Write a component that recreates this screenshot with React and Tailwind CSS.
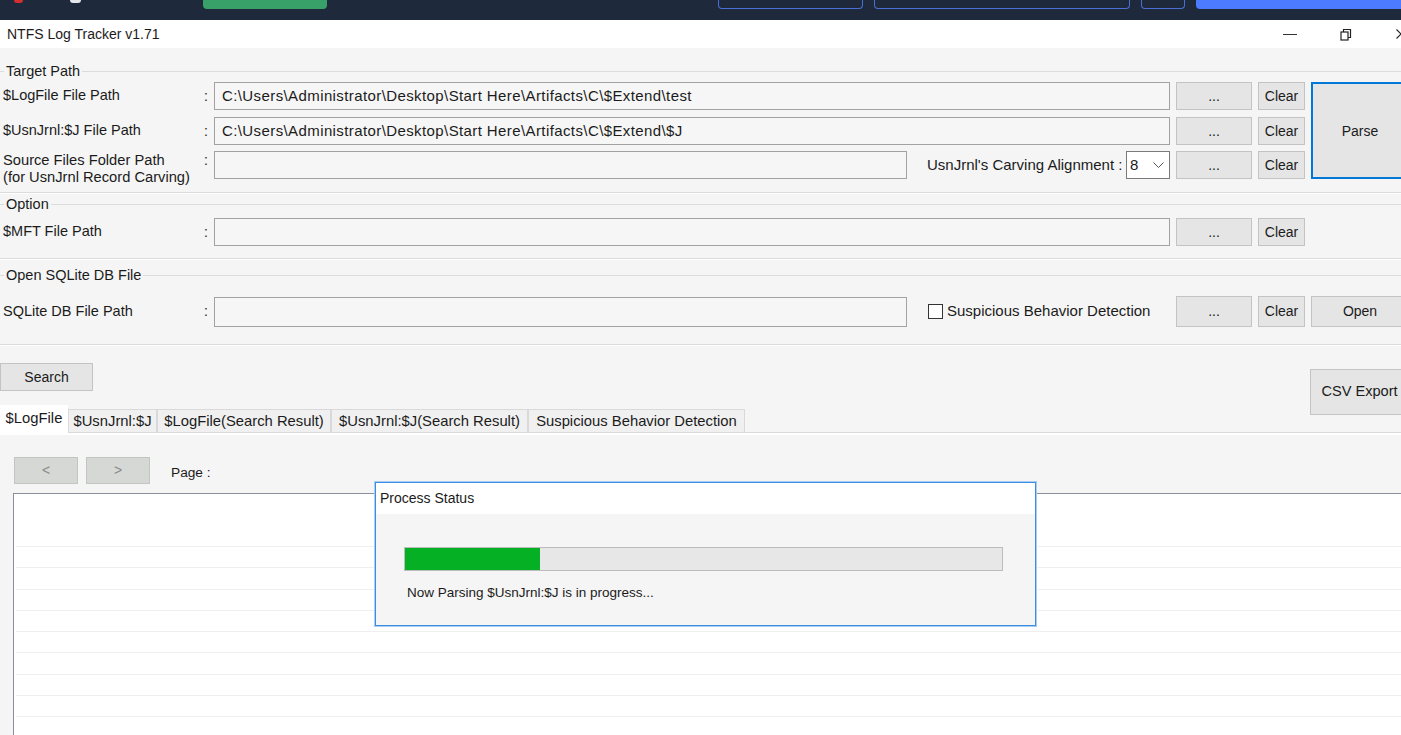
import React from "react";

const Btn = ({ className = "", children }) => (
  <div
    className={
      "flex shrink-0 items-center justify-center border border-[#c3c3c3] bg-[#e5e5e5] text-[#1b1b1b] " +
      className
    }
  >
    {children}
  </div>
);

const Input = ({ className = "", children }) => (
  <div
    className={
      "flex h-[28px] shrink-0 items-center border border-[#a2a2a2] bg-[#f6f6f6] pl-[7px] text-[15px] tracking-[0.4px] text-[#1b1b1b] " +
      className
    }
  >
    {children}
  </div>
);

const GroupHeader = ({ label, className = "" }) => (
  <div className={"flex h-[16px] items-center " + className}>
    <div className="h-px w-[4px] bg-[#dcdcdc]" />
    <span className="px-[2px] text-[14.5px] leading-[16px]">{label}</span>
    <div className="h-px flex-1 bg-[#dcdcdc]" />
  </div>
);

const GroupLine = ({ className = "" }) => (
  <div className={"h-[2px] border-t border-[#dcdcdc] bg-white " + className} />
);

const Label = ({ children }) => (
  <>
    <div className="w-[201px] shrink-0 pl-[3px] text-[14.5px]">{children}</div>
    <div className="w-[13px] shrink-0 pl-[3px]">:</div>
  </>
);

const tabs = [
  { t: "$LogFile", w: "w-[68px]", sel: true },
  { t: "$UsnJrnl:$J", w: "w-[89px]" },
  { t: "$LogFile(Search Result)", w: "w-[174px]" },
  { t: "$UsnJrnl:$J(Search Result)", w: "w-[197px]" },
  { t: "Suspicious Behavior Detection", w: "w-[217px]" },
];

export default function App() {
  return (
    <div className="relative h-[735px] w-[1401px] overflow-hidden bg-[#f5f5f5] font-['Liberation_Sans',Arial,sans-serif] text-[14px] text-[#1b1b1b]">
      {/* top dark strip */}
      <div className="flex h-[20px] items-start bg-[#1e293b]">
        <div className="ml-[14px] h-[3px] w-[9px] shrink-0 rounded-b-full bg-[#d32f2f]" />
        <div className="ml-[47px] h-[3px] w-[11px] shrink-0 rounded-b-full bg-[#e5e7eb]" />
        <div className="ml-[122px] h-[9px] w-[124px] shrink-0 rounded-b-[4px] bg-[#38a169]" />
        <div className="ml-[391px] h-[9px] w-[145px] shrink-0 rounded-b-[4px] border border-t-0 border-[#4a6fd6]" />
        <div className="ml-[11px] h-[9px] w-[256px] shrink-0 rounded-b-[4px] border border-t-0 border-[#4a6fd6]" />
        <div className="ml-[11px] h-[9px] w-[44px] shrink-0 rounded-b-[4px] border border-t-0 border-[#4a6fd6]" />
        <div className="ml-[11px] h-[9px] flex-1 rounded-bl-[4px] bg-[#4c7bff]" />
      </div>

      {/* title bar */}
      <div className="flex h-[28px] items-center bg-white">
        <span className="pl-[7px] text-[14px]">NTFS Log Tracker v1.71</span>
        <div className="ml-auto mr-[-5px] flex items-center">
          <div className="h-px w-[14px] bg-[#333]" />
          <svg className="ml-[43px]" width="12" height="13" viewBox="0 0 12 13" fill="none" stroke="#222" strokeWidth="1.2">
            <rect x="1" y="4" width="7" height="8" />
            <path d="M3.5 4V1.5H10.5V9.5H8" />
          </svg>
          <svg className="ml-[44px]" width="10" height="10" viewBox="0 0 10 10" fill="none" stroke="#222" strokeWidth="1.1">
            <path d="M0.5 0.5L9.5 9.5M9.5 0.5L0.5 9.5" />
          </svg>
        </div>
      </div>

      <div className="w-[1409px]">
        {/* Target Path */}
        <GroupHeader label="Target Path" className="mt-[15px]" />
        <div className="mt-[3px] flex">
          <div className="flex flex-col">
            <div className="flex h-[28px] items-center">
              <Label>$LogFile File Path</Label>
              <Input className="w-[956px]">C:\Users\Administrator\Desktop\Start Here\Artifacts\C\$Extend\test</Input>
              <Btn className="ml-[6px] h-[28px] w-[76px]">...</Btn>
              <Btn className="ml-[6px] h-[28px] w-[47px]">Clear</Btn>
            </div>
            <div className="mt-[7px] flex h-[28px] items-center">
              <Label>$UsnJrnl:$J File Path</Label>
              <Input className="w-[956px]">C:\Users\Administrator\Desktop\Start Here\Artifacts\C\$Extend\$J</Input>
              <Btn className="ml-[6px] h-[28px] w-[76px]">...</Btn>
              <Btn className="ml-[6px] h-[28px] w-[47px]">Clear</Btn>
            </div>
            <div className="mt-[6px] flex h-[28px] items-start">
              <div className="w-[201px] shrink-0 pl-[3px] pt-[1px] text-[14.7px] leading-[17px]">
                Source Files Folder Path
                <br />
                (for UsnJrnl Record Carving)
              </div>
              <div className="w-[13px] shrink-0 pl-[3px] pt-[1px] leading-[17px]">:</div>
              <div className="flex h-[28px] w-[956px] shrink-0 items-center">
                <Input className="w-[693px]" />
                <span className="ml-[20px] text-[15px]">UsnJrnl's Carving Alignment :</span>
                <div className="ml-auto flex h-[28px] w-[44px] items-center border border-[#7a7a7a] bg-white pl-[3px] text-[15px]">
                  <span>8</span>
                  <svg className="ml-auto mr-[5px]" width="11" height="6" viewBox="0 0 11 6" fill="none" stroke="#555" strokeWidth="1">
                    <path d="M0.5 0.5L5.5 5.5L10.5 0.5" />
                  </svg>
                </div>
              </div>
              <Btn className="ml-[6px] h-[28px] w-[76px]">...</Btn>
              <Btn className="ml-[6px] h-[28px] w-[47px]">Clear</Btn>
            </div>
          </div>
          <div className="ml-[6px] flex h-[97px] w-[98px] shrink-0 items-center justify-center border-2 border-[#0078d7] bg-[#e5e5e5] pt-[1px]">
            Parse
          </div>
        </div>
        <GroupLine className="mt-[13px]" />

        {/* Option */}
        <GroupHeader label="Option" className="mt-[2px]" />
        <div className="mt-[6px] flex h-[28px] items-center">
          <Label>$MFT File Path</Label>
          <Input className="w-[956px]" />
          <Btn className="ml-[6px] h-[28px] w-[76px]">...</Btn>
          <Btn className="ml-[6px] h-[28px] w-[47px]">Clear</Btn>
        </div>
        <GroupLine className="mt-[12px]" />

        {/* SQLite */}
        <GroupHeader label="Open SQLite DB File" className="mt-[7px]" />
        <div className="mt-[13px] flex h-[31px] items-center">
          <Label>SQLite DB File Path</Label>
          <div className="flex h-[31px] w-[956px] shrink-0 items-center">
            <Input className="h-[30px] w-[693px]" />
            <div className="ml-[21px] h-[15px] w-[15px] border border-[#333] bg-white" />
            <span className="ml-[4px] text-[15px]">Suspicious Behavior Detection</span>
          </div>
          <Btn className="ml-[6px] h-[31px] w-[76px]">...</Btn>
          <Btn className="ml-[6px] h-[31px] w-[47px]">Clear</Btn>
          <Btn className="ml-[6px] h-[31px] w-[98px]">Open</Btn>
        </div>
        <GroupLine className="mt-[17px]" />

        {/* search / export / tabs */}
        <div className="flex">
          <div className="flex flex-col">
            <Btn className="mt-[17px] h-[28px] w-[93px]">Search</Btn>
            <div className="mt-[14px] flex h-[27px] items-end text-[14.8px]">
              {tabs.map((t) =>
                t.sel ? (
                  <div key={t.t} className={"flex h-[27px] items-center justify-center bg-white " + t.w}>
                    {t.t}
                  </div>
                ) : (
                  <div
                    key={t.t}
                    className={"flex h-[23px] items-center justify-center border border-b-0 border-[#d9d9d9] bg-[#f0f0f0] " + t.w}
                  >
                    {t.t}
                  </div>
                )
              )}
            </div>
          </div>
          <Btn className="ml-auto mt-[23px] h-[46px] w-[99px] text-[14.6px]">CSV Export</Btn>
        </div>
        <div className="flex h-[3px]">
          <div className="w-[68px] bg-white" />
          <div className="flex-1 border-t border-[#d9d9d9] bg-white" />
        </div>

        {/* tab panel */}
        <div className="mt-[22px] flex h-[27px] items-center">
          <div className="ml-[14px] flex h-[27px] w-[64px] items-center justify-center border border-[#c2c5c2] bg-[#d5d8d5] text-[#8a8a8a]">
            &lt;
          </div>
          <div className="ml-[8px] flex h-[27px] w-[64px] items-center justify-center border border-[#c2c5c2] bg-[#d5d8d5] text-[#8a8a8a]">
            &gt;
          </div>
          <span className="ml-[21px] pt-[5px] text-[13.7px]">Page :</span>
        </div>
        <div className="ml-[13px] mt-[9px] h-[260px] w-[1396px] border border-[#8a9099] bg-white pl-[2px]">
          <div className="h-[52px]" />
          {Array.from({ length: 10 }).map((_, i) => (
            <div key={i} className="h-[21.25px] border-t border-[#efefef]" />
          ))}
        </div>
      </div>

      {/* Process Status dialog */}
      <div className="absolute left-[375px] top-[482px] flex h-[144px] w-[661px] flex-col border border-[#3d8ee0] shadow-[0_0_0_1px_#a9cdf2]">
        <div className="flex h-[31px] items-center bg-white pl-[4px]">Process Status</div>
        <div className="flex-1 bg-[#f5f5f5] pl-[28px] pt-[33px]">
          <div className="h-[24px] w-[599px] border border-[#bcbcbc] bg-[#e6e7e6]">
            <div className="h-full w-[135px] bg-[#06b025]" />
          </div>
          <div className="mt-[12px] pl-[3px] text-[13.5px]">Now Parsing $UsnJrnl:$J is in progress...</div>
        </div>
      </div>
    </div>
  );
}
